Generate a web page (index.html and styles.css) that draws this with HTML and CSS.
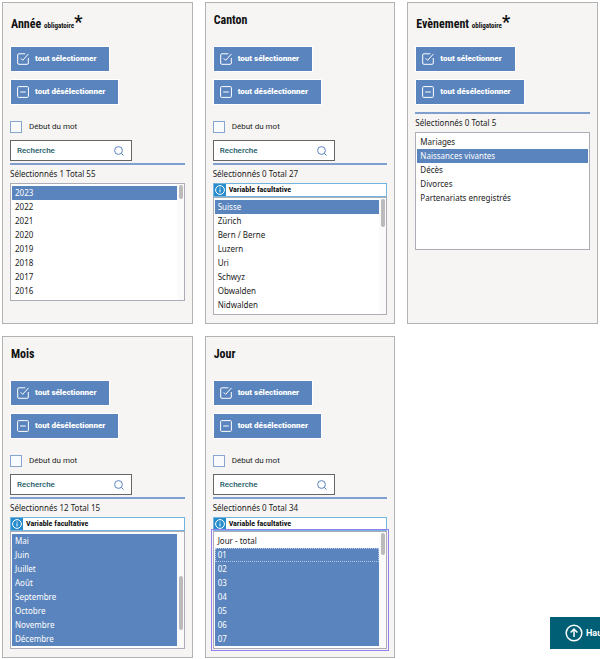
FILE: index.html
```
<!DOCTYPE html>
<html lang="fr">
<head>
<meta charset="utf-8">
<title>Choix des variables</title>
<link rel="stylesheet" href="styles.css">
</head>
<body>

<svg class="symbols" aria-hidden="true">
  <symbol id="check" viewBox="0 0 12 12">
    <path d="M11.3 5v5a1.2 1.2 0 0 1-1.2 1.3H1.9A1.2 1.2 0 0 1 .7 10V2A1.2 1.2 0 0 1 1.9.8h6.4M3.7 5.3l2 2L11.5.9"/>
  </symbol>
  <symbol id="minus" viewBox="0 0 12 12">
    <rect x=".6" y=".6" width="10.8" height="10.8" rx="1"/>
    <path d="M3.2 6h5.6"/>
  </symbol>
  <symbol id="search" viewBox="0 0 10 10">
    <circle cx="4.5" cy="4.5" r="3.9"/>
    <path d="M7.3 7.3l2.2 2.2"/>
  </symbol>
  <symbol id="info" viewBox="0 0 10 10">
    <circle cx="5" cy="5" r="4.4"/>
    <path d="M5 4.4v3M5 2.5v1"/>
  </symbol>
</svg>

<main class="variables">
  <section class="card">
    <h2 class="title required">Année <small>obligatoire</small><span class="star">*</span></h2>
    <div class="actions">
      <button type="button"><svg><use href="#check"/></svg>tout sélectionner</button>
      <button type="button"><svg><use href="#minus"/></svg>tout désélectionner</button>
    </div>
    <div class="filter">
      <label class="start"><input type="checkbox">Début du mot</label>
      <div class="search">
        <input type="text" placeholder="Recherche" aria-label="Recherche année">
        <svg><use href="#search"/></svg>
      </div>
    </div>
    <label class="count" for="annee">Sélectionnés 1 Total 55</label>
    <div class="list">
      <select id="annee" multiple size="8">
        <option selected>2023</option>
        <option>2022</option>
        <option>2021</option>
        <option>2020</option>
        <option>2019</option>
        <option>2018</option>
        <option>2017</option>
        <option>2016</option>
      </select>
      <div class="scroll"><span class="thumb thumb-small"></span></div>
    </div>
  </section>

  <section class="card">
    <h2 class="title">Canton</h2>
    <div class="actions">
      <button type="button"><svg><use href="#check"/></svg>tout sélectionner</button>
      <button type="button"><svg><use href="#minus"/></svg>tout désélectionner</button>
    </div>
    <div class="filter">
      <label class="start"><input type="checkbox">Début du mot</label>
      <div class="search">
        <input type="text" placeholder="Recherche" aria-label="Recherche canton">
        <svg><use href="#search"/></svg>
      </div>
    </div>
    <label class="count" for="canton">Sélectionnés 0 Total 27</label>
    <div class="optional"><span class="info"><svg><use href="#info"/></svg></span>Variable facultative</div>
    <div class="list">
      <select id="canton" multiple size="8">
        <option selected>Suisse</option>
        <option>Zürich</option>
        <option>Bern / Berne</option>
        <option>Luzern</option>
        <option>Uri</option>
        <option>Schwyz</option>
        <option>Obwalden</option>
        <option>Nidwalden</option>
      </select>
      <div class="scroll"><span class="thumb thumb-medium"></span></div>
    </div>
  </section>

  <section class="card">
    <h2 class="title required">Evènement <small>obligatoire</small><span class="star">*</span></h2>
    <div class="actions">
      <button type="button"><svg><use href="#check"/></svg>tout sélectionner</button>
      <button type="button"><svg><use href="#minus"/></svg>tout désélectionner</button>
    </div>
    <label class="count" for="evenement">Sélectionnés 0 Total 5</label>
    <select id="evenement" class="short" multiple size="8">
      <option>Mariages</option>
      <option selected>Naissances vivantes</option>
      <option>Décès</option>
      <option>Divorces</option>
      <option>Partenariats enregistrés</option>
    </select>
  </section>

  <section class="card">
    <h2 class="title">Mois</h2>
    <div class="actions">
      <button type="button"><svg><use href="#check"/></svg>tout sélectionner</button>
      <button type="button"><svg><use href="#minus"/></svg>tout désélectionner</button>
    </div>
    <div class="filter">
      <label class="start"><input type="checkbox">Début du mot</label>
      <div class="search">
        <input type="text" placeholder="Recherche" aria-label="Recherche mois">
        <svg><use href="#search"/></svg>
      </div>
    </div>
    <label class="count" for="mois">Sélectionnés 12 Total 15</label>
    <div class="optional"><span class="info"><svg><use href="#info"/></svg></span>Variable facultative</div>
    <div class="list">
      <select id="mois" multiple size="8">
        <option selected>Mai</option>
        <option selected>Juin</option>
        <option selected>Juillet</option>
        <option selected>Août</option>
        <option selected>Septembre</option>
        <option selected>Octobre</option>
        <option selected>Novembre</option>
        <option selected>Décembre</option>
      </select>
      <div class="scroll"><span class="thumb thumb-large"></span></div>
    </div>
  </section>

  <section class="card">
    <h2 class="title">Jour</h2>
    <div class="actions">
      <button type="button"><svg><use href="#check"/></svg>tout sélectionner</button>
      <button type="button"><svg><use href="#minus"/></svg>tout désélectionner</button>
    </div>
    <div class="filter">
      <label class="start"><input type="checkbox">Début du mot</label>
      <div class="search">
        <input type="text" placeholder="Recherche" aria-label="Recherche jour">
        <svg><use href="#search"/></svg>
      </div>
    </div>
    <label class="count" for="jour">Sélectionnés 0 Total 34</label>
    <div class="optional"><span class="info"><svg><use href="#info"/></svg></span>Variable facultative</div>
    <div class="list">
      <select id="jour" class="active" multiple size="8">
        <option>Jour - total</option>
        <option class="current" selected>01</option>
        <option selected>02</option>
        <option selected>03</option>
        <option selected>04</option>
        <option selected>05</option>
        <option selected>06</option>
        <option selected>07</option>
      </select>
      <div class="scroll"><span class="thumb"></span></div>
    </div>
  </section>
</main>

<a class="top" href="#"><svg viewBox="0 0 18 18"><circle cx="9" cy="9" r="7.8"/><path d="M9 13V5.3M5.6 8.5L9 5.1l3.4 3.4"/></svg>Haut</a>

</body>
</html>
```
FILE: styles.css
```
* {
  box-sizing: border-box;
}
body {
  margin: 0;
  background: #fff;
  color: #222;
  font: 8px/12px "Noto Sans", "Open Sans", sans-serif;
}
svg {
  fill: none;
  stroke: currentColor;
  flex: none;
}
.symbols {
  position: absolute;
  width: 0;
  height: 0;
}
.variables {
  display: grid;
  grid-template-columns: repeat(3, 1fr);
  gap: 12px;
  padding: 2px;
}
.card {
  min-height: 322px;
  padding: 0 7px 8px;
  border: 1px solid #b1b2b3;
  background: #f6f5f4;
}
.title {
  height: 43px;
  margin: 0;
  padding: 9px 1px 0;
  color: #111;
  font: bold 12px/16px "Roboto Condensed", Roboto, sans-serif;
}
.required {
  line-height: 24px;
}
.title small {
  font-size: 7px;
}
.star {
  font-size: 18px;
  line-height: 16px;
}

/* buttons */
.actions {
  display: flex;
  flex-direction: column;
  align-items: flex-start;
  gap: 7px;
}
.actions button {
  display: flex;
  align-items: center;
  gap: 6px;
  height: 26px;
  padding: 0 13px 0 6px;
  border: 1px solid #fff;
  background: #5a84bd;
  color: #fff;
  font: 900 8px/12px Roboto, sans-serif;
}
.actions svg {
  width: 12px;
  height: 12px;
}

/* search */
.filter {
  padding-top: 16px;
}
.start {
  display: flex;
  align-items: center;
  gap: 7px;
  height: 12px;
  font: 8px/12px Roboto, sans-serif;
}
.start input {
  appearance: none;
  width: 12px;
  height: 12px;
  margin: 0;
  border: 1px solid #86a5d0;
  background: #f8fafc;
}
.search {
  display: flex;
  align-items: center;
  width: 122px;
  height: 21px;
  margin: 7px 0 -5px;
  padding: 0 7px 0 6px;
  border: 1px solid #666;
  background: #fff;
}
.search input {
  flex: 1;
  min-width: 0;
  padding: 0;
  border: 0;
  outline: 0;
  font: 500 8px/12px Roboto, sans-serif;
}
.search input::placeholder {
  color: #195a66;
}
.search svg {
  width: 10px;
  height: 10px;
  color: #5a84bd;
}

/* lists */
.count {
  display: block;
  height: 20px;
  margin-top: 7px;
  padding-top: 3px;
  border-top: 2px solid #7f9fce;
}
.optional {
  display: flex;
  align-items: center;
  gap: 3px;
  height: 14px;
  border: 1px solid #73b5df;
  background: #fff;
  color: #111;
  font: bold 8px/12px "Roboto Condensed", Roboto, sans-serif;
}
.info {
  display: flex;
  align-items: center;
  padding: 0 1px;
  height: 12px;
  background: #278ccb;
  color: #fff;
}
.info svg {
  width: 10px;
  height: 10px;
}
.list {
  position: relative;
}
select {
  display: block;
  width: 100%;
  height: 118px;
  padding: 2px 1px;
  border: 1px solid #adadb7;
  border-radius: 0;
  outline: 0;
  background: #fff;
  color: #222;
  font: inherit;
  scrollbar-width: none;
}
.list select {
  padding-right: 7px;
}
option {
  height: 14px;
  min-height: 14px;
  padding: 1px 3px;
  line-height: 12px;
}
option:checked {
  background: #5a84bd linear-gradient(#5a84bd, #5a84bd);
  -webkit-text-fill-color: #fff;
}
.short {
  overflow: hidden;
}
.active {
  outline: 1px solid #9580f0;
  outline-offset: 1px;
}
.current {
  outline: 1px dotted #b9cbe4;
  outline-offset: -1px;
}

/* scrollbar drawn over the right side of the list */
.scroll {
  position: absolute;
  top: 1px;
  right: 1px;
  bottom: 1px;
  width: 7px;
  padding: 1px 2px;
  background: #fafafa;
  pointer-events: none;
}
.thumb {
  display: block;
  width: 4px;
  height: 22px;
  border-radius: 2px;
  background: #bbb;
}
.thumb-small {
  height: 14px;
}
.thumb-medium {
  height: 28px;
}
.thumb-large {
  height: 54px;
  margin-top: 43px;
}

.top {
  position: fixed;
  right: -20px;
  bottom: 10px;
  display: flex;
  align-items: center;
  gap: 3px;
  width: 70px;
  height: 32px;
  padding-left: 15px;
  background: #005f75;
  color: #fff;
  font: bold 9px/12px Roboto, sans-serif;
  text-decoration: none;
  white-space: nowrap;
}
.top svg {
  width: 18px;
  height: 18px;
  stroke-width: 1.5;
}
```
